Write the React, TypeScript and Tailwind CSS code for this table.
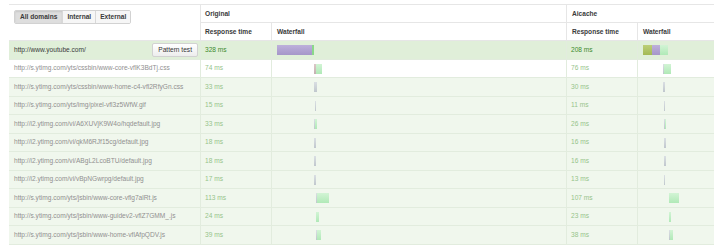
import React from "react";

// Request list: original vs aicache response times with mini waterfalls.
// Bar segments are [width, colour] pairs, offset is px from the waterfall cell edge.

type Seg = [number, string];
type Bar = { offset: number; segs: Seg[] };
type Row = { url: string; orig: number; ai: number; ob: Bar; ab: Bar };

const OLIVE = "linear-gradient(#bccf78,#a3b955)";
const PURPLE = "linear-gradient(#bdb0db,#a596c9)";
const GREEN = "linear-gradient(#d2f4d5,#b0e9b7)";
const GRAY = "linear-gradient(#dadfe3,#c0c7cd)";
const RED = "linear-gradient(#dcc8c8,#c4b0b0)";
const EDGE = "#8ad88a";

const rows: Row[] = [
  {
    url: "http://www.youtube.com/",
    orig: 328,
    ai: 208,
    ob: { offset: 5, segs: [[35, PURPLE], [1.5, EDGE]] },
    ab: { offset: 5, segs: [[9, OLIVE], [8, PURPLE], [8, GREEN]] },
  },
  {
    url: "http://s.ytimg.com/yts/cssbin/www-core-vflK3BdTj.css",
    orig: 74,
    ai: 76,
    ob: { offset: 42, segs: [[2, RED], [6, GREEN]] },
    ab: { offset: 25, segs: [[1, GRAY], [7, GREEN]] },
  },
  {
    url: "http://s.ytimg.com/yts/cssbin/www-home-c4-vfl2RfyGn.css",
    orig: 33,
    ai: 30,
    ob: { offset: 42, segs: [[3, GRAY]] },
    ab: { offset: 25, segs: [[2, GRAY]] },
  },
  {
    url: "http://s.ytimg.com/yts/img/pixel-vfl3z5WfW.gif",
    orig: 15,
    ai: 11,
    ob: { offset: 42.5, segs: [[1, GRAY]] },
    ab: { offset: 26, segs: [[1, GRAY]] },
  },
  {
    url: "http://i2.ytimg.com/vi/A6XUVjK9W4o/hqdefault.jpg",
    orig: 33,
    ai: 26,
    ob: { offset: 42, segs: [[1, GRAY], [2, GREEN]] },
    ab: { offset: 26, segs: [[1, GRAY], [1, GREEN]] },
  },
  {
    url: "http://i2.ytimg.com/vi/qkM6RJf15cg/default.jpg",
    orig: 18,
    ai: 16,
    ob: { offset: 42, segs: [[2, GRAY]] },
    ab: { offset: 26, segs: [[1.5, GRAY]] },
  },
  {
    url: "http://i2.ytimg.com/vi/ABgL2LcoBTU/default.jpg",
    orig: 18,
    ai: 16,
    ob: { offset: 42, segs: [[2, GRAY]] },
    ab: { offset: 26, segs: [[1.5, GRAY]] },
  },
  {
    url: "http://i2.ytimg.com/vi/vBpNGwrpg/default.jpg",
    orig: 17,
    ai: 13,
    ob: { offset: 42, segs: [[2, GRAY]] },
    ab: { offset: 26, segs: [[1, GRAY]] },
  },
  {
    url: "http://s.ytimg.com/yts/jsbin/www-core-vflg7alRt.js",
    orig: 113,
    ai: 107,
    ob: { offset: 44, segs: [[1, GRAY], [12, GREEN]] },
    ab: { offset: 31, segs: [[10, GREEN]] },
  },
  {
    url: "http://s.ytimg.com/yts/jsbin/www-guidev2-vflZ7GMM_.js",
    orig: 24,
    ai: 23,
    ob: { offset: 44, segs: [[3, GREEN]] },
    ab: { offset: 31, segs: [[2, GREEN]] },
  },
  {
    url: "http://s.ytimg.com/yts/jsbin/www-home-vflAfpQDV.js",
    orig: 39,
    ai: 38,
    ob: { offset: 44, segs: [[1, GRAY], [4, GREEN]] },
    ab: { offset: 31, segs: [[1, GRAY], [3, GREEN]] },
  },
];

function Waterfall({ bar }: { bar: Bar }) {
  return (
    <div className="relative h-full">
      <div className="absolute top-[4px] flex h-[10px]" style={{ left: bar.offset }}>
        {bar.segs.map(([w, bg], i) => (
          <div key={i} className="h-full" style={{ width: w, background: bg }} />
        ))}
      </div>
    </div>
  );
}

const cols = "grid grid-cols-[192px_71px_295px_71px_1fr]";

export default function App() {
  return (
    <div
      className="h-[248px] w-[714px] overflow-hidden bg-white pl-[9px] pt-[4px] text-[6.6px] text-[#333]"
      style={{ fontFamily: '"Liberation Sans", Arial, sans-serif' }}
    >
      {/* header */}
      <div className={`${cols} grid-rows-[18px_18px] border-t border-[#e6e6e6]`}>
        <div className="row-span-2 border-r border-b border-[#e6e6e6] pl-[5px] pt-[5px]">
          <div className="flex h-[14px] w-fit overflow-hidden rounded-[2px] border border-[#d2d2d2] font-bold text-[#3a3a3a]">
            <div className="flex items-center bg-[#dedede] px-[5px] shadow-[inset_0_1px_2px_rgba(0,0,0,0.1)]">
              All domains
            </div>
            <div className="flex items-center border-l border-[#d8d8d8] bg-[#f6f6f6] px-[4px]">Internal</div>
            <div className="flex items-center border-l border-[#d8d8d8] bg-[#f6f6f6] px-[4px]">External</div>
          </div>
        </div>
        <div className="col-span-2 flex items-center border-r border-b border-[#e6e6e6] pl-[4px] font-bold text-[#3a3a3a]">
          Original
        </div>
        <div className="col-span-2 flex items-center border-b border-[#e6e6e6] pl-[5px] font-bold text-[#3a3a3a]">
          Aicache
        </div>
        <div className="flex items-center border-r border-b border-[#e6e6e6] pl-[4px] font-bold text-[#3a3a3a]">
          Response time
        </div>
        <div className="flex items-center border-r border-b border-[#e6e6e6] pl-[5px] font-bold text-[#3a3a3a]">
          Waterfall
        </div>
        <div className="flex items-center border-r border-b border-[#e6e6e6] pl-[5px] font-bold text-[#3a3a3a]">
          Response time
        </div>
        <div className="flex items-center border-b border-[#e6e6e6] pl-[5px] font-bold text-[#3a3a3a]">Waterfall</div>
      </div>

      {/* body */}
      {rows.map((r, i) => {
        const first = i === 0;
        const bg = first ? "bg-[#e0efd9]" : i === 1 ? "bg-white" : "bg-[#f0f7ed]";
        return (
          <div key={r.url} className={`${cols} h-[18.5px] border-b border-[#e2ecde] ${bg}`}>
            <div className="flex items-center justify-between border-r border-[#e2ecde] pl-[5px] pr-[2px]">
              <span className={first ? "text-[#3a3a3a]" : "text-[#909090]"}>{r.url}</span>
              {first && (
                <span className="flex h-[14px] items-center rounded-[2px] border border-[#d2d2d2] bg-gradient-to-b from-white to-[#ededed] px-[5px] text-[#333]">
                  Pattern test
                </span>
              )}
            </div>
            <div
              className={`flex items-center border-r border-[#e2ecde] pl-[4px] ${first ? "text-[#3d8a2e]" : "text-[#96c48b]"}`}
            >
              {r.orig} ms
            </div>
            <div className="border-r border-[#e2ecde]">
              <Waterfall bar={r.ob} />
            </div>
            <div
              className={`flex items-center border-r border-[#e2ecde] pl-[4px] ${first ? "text-[#3d8a2e]" : "text-[#96c48b]"}`}
            >
              {r.ai} ms
            </div>
            <div>
              <Waterfall bar={r.ab} />
            </div>
          </div>
        );
      })}
    </div>
  );
}
